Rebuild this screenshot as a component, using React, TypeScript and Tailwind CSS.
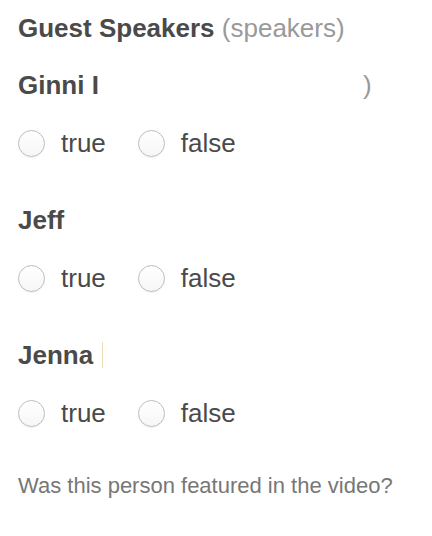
const SPEAKERS = ["Ginni", "Jeff", "Jenna"];

function Radio({ label }: { label: string }) {
  return (
    <label className="flex items-center gap-[16px]">
      <span className="h-[27px] w-[27px] rounded-full border border-[#bdbdbd] bg-gradient-to-b from-white to-[#f6f6f6] shadow-[0_1px_0_rgba(0,0,0,0.05)]" />
      <span>{label}</span>
    </label>
  );
}

function SpeakerName({ name }: { name: string }) {
  if (name === "Ginni") {
    return (
      <div className="flex h-[30px] items-center font-bold">
        <span>Ginni I</span>
        <span className="ml-[264px] font-normal text-[#999]">)</span>
      </div>
    );
  }
  if (name === "Jenna") {
    return (
      <div className="flex h-[30px] items-center font-bold">
        <span>Jenna</span>
        <span className="ml-[9px] h-[26px] w-px bg-[#efdcb8]" />
      </div>
    );
  }
  return <div className="flex h-[30px] items-center font-bold">{name}</div>;
}

export default function App() {
  return (
    <div
      className="min-h-[536px] w-[432px] bg-white pl-[18px] pt-[13px] text-[26px] text-[#4a4a4a]"
      style={{ fontFamily: '"Liberation Sans", Arial, sans-serif' }}
    >
      <div className="h-[30px] leading-[30px]">
        <span className="font-bold">Guest Speakers</span>{" "}
        <span className="text-[#999]">(speakers)</span>
      </div>

      <div className="mt-[27px] flex flex-col gap-[47px]">
        {SPEAKERS.map((name) => (
          <div key={name} className="flex flex-col gap-[28px]">
            <SpeakerName name={name} />
            <div className="flex h-[30px] items-center gap-[32px]">
              <Radio label="true" />
              <Radio label="false" />
            </div>
          </div>
        ))}
      </div>

      <p className="mt-[47px] text-[22px] leading-[22px] text-[#777]">
        Was this person featured in the video?
      </p>
    </div>
  );
}
